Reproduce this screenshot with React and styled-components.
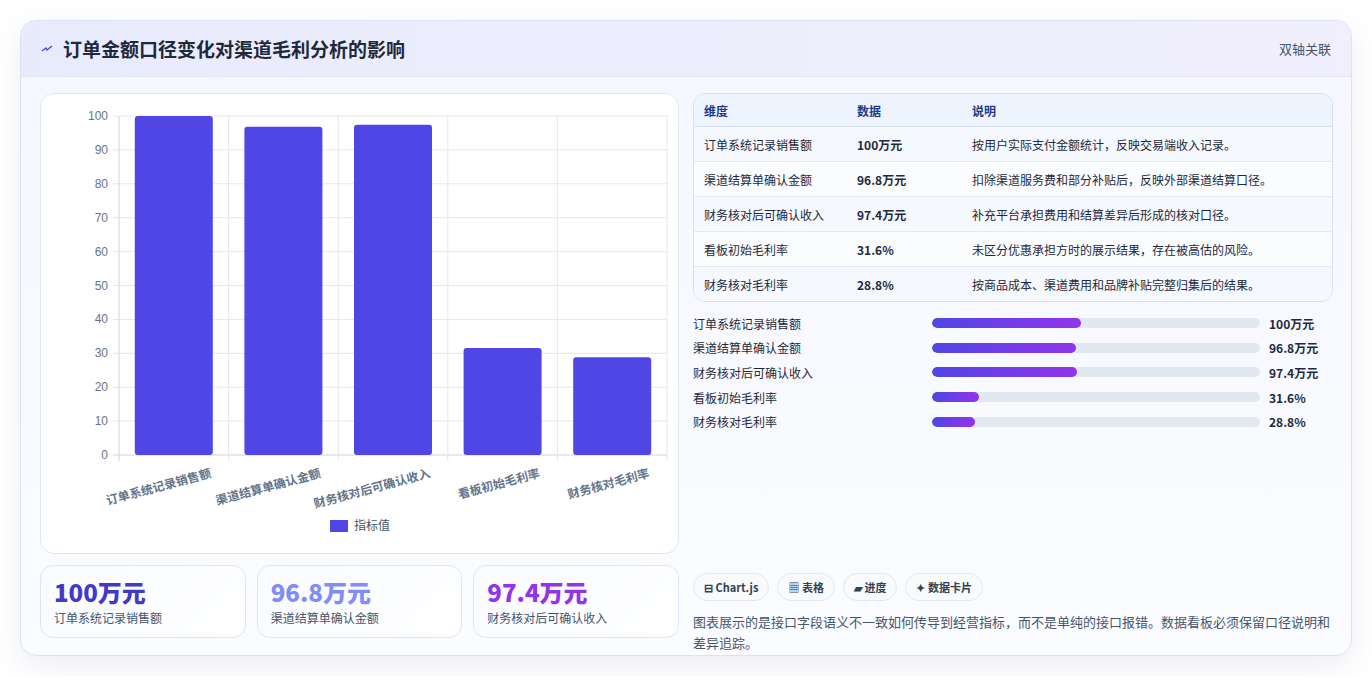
import React from "react";
import styled, { createGlobalStyle } from "styled-components";

const Global = createGlobalStyle`
  html, body { margin:0; padding:0; background:#fff; }
  body { font-family: "Noto Sans CJK SC", "Noto Sans", sans-serif; }
`;

const Page = styled.div`
  padding: 20px;
  width: 1332px;
`;
const Card = styled.div`
  border: 1px solid #dbe2f3;
  border-radius: 16px;
  overflow: hidden;
  background: linear-gradient(180deg, #f6f7fe 0%, #fbfcff 100%);
  box-shadow: 0 10px 30px rgba(80, 90, 160, 0.10);
  height: 636px;
  box-sizing: border-box;
`;
const Header = styled.div`
  height: 55px;
  display: flex;
  align-items: center;
  justify-content: space-between;
  padding: 0 20px;
  background: linear-gradient(90deg, #e8ebfc 0%, #f1effd 100%);
  border-bottom: 1px solid #e3e6f5;
`;
const Title = styled.h1`
  margin: 0;
  font-size: 19px;
  font-weight: 700;
  color: #1e293b;
  display: flex;
  align-items: center;
  gap: 10px;
`;
const HeadRight = styled.span`
  font-size: 13px;
  color: #475569;
`;
const Body = styled.div`
  display: grid;
  grid-template-columns: 639px 640px;
  gap: 14px;
  padding: 16px 19px 0 19px;
`;
const Col = styled.div`
  display: flex;
  flex-direction: column;
`;
const ChartCard = styled.div`
  height: 461px;
  background: #fff;
  border: 1px solid #e0e6f1;
  border-radius: 14px;
  box-sizing: border-box;
  overflow: hidden;
`;
const Stats = styled.div`
  display: grid;
  grid-template-columns: repeat(3, 1fr);
  gap: 11px;
  margin-top: 11px;
`;
const Stat = styled.div`
  height: 73px;
  box-sizing: border-box;
  border: 1px solid #dde6f3;
  border-radius: 13px;
  background: linear-gradient(135deg, #f9fbff, #ffffff);
  padding: 11px 13px;
`;
const StatVal = styled.div`
  font-size: 24px;
  font-weight: 800;
  line-height: 30px;
  color: ${p => p.$c};
`;
const StatLbl = styled.div`
  font-size: 12px;
  color: #475569;
  margin-top: 2px;
`;
const Table = styled.table`
  width: 100%;
  border-collapse: separate;
  border-spacing: 0;
  border: 1px solid #d5e0f0;
  border-radius: 12px;
  overflow: hidden;
  font-size: 12px;
  background: #fff;
`;
const Th = styled.th`
  text-align: left;
  font-weight: 700;
  color: #1e3a8a;
  background: #eef4fd;
  height: 32px;
  padding: 0 10px;
  border-bottom: 1px solid #d5e0f0;
  width: ${p => p.$w || "auto"};
`;
const Td = styled.td`
  height: 34px;
  padding: 0 10px;
  color: #1e293b;
  font-weight: ${p => (p.$b ? 600 : 400)};
  border-top: ${p => (p.$first ? "none" : "1px solid #e5ebf4")};
  background: ${p => (p.$odd ? "#f5f8fd" : "#fbfcfe")};
`;
const Bars = styled.div`
  display: flex;
  flex-direction: column;
  gap: 6.7px;
  margin-top: 12px;
`;
const BarRow = styled.div`
  display: grid;
  grid-template-columns: 239px 328px 1fr;
  gap: 0;
  align-items: center;
  height: 18px;
  font-size: 12px;
  color: #1e293b;
`;
const Track = styled.div`
  height: 10px;
  border-radius: 5px;
  background: #e2e8f0;
  overflow: hidden;
`;
const Fill = styled.div`
  height: 100%;
  border-radius: 5px;
  background: linear-gradient(90deg, #4f46e5, #9333ea);
`;
const BarVal = styled.span`
  font-weight: 700;
  padding-left: 9px;
`;
const Spacer = styled.div`
  flex: 1;
`;
const Chips = styled.div`
  display: flex;
  gap: 8px;
`;
const Chip = styled.span`
  height: 28px;
  box-sizing: border-box;
  padding: 0 10px;
  border: 1px solid #e2e8f0;
  border-radius: 14px;
  background: #f8fafc;
  font-size: 11px;
  font-weight: 700;
  color: #334155;
  display: inline-flex;
  align-items: center;
  gap: 3px;
`;
const Desc = styled.p`
  margin: 10px 0 0;
  font-size: 13px;
  line-height: 21px;
  color: #475569;
`;

const data = [
  ["订单系统记录销售额", 100, "100万元", "按用户实际支付金额统计，反映交易端收入记录。"],
  ["渠道结算单确认金额", 96.8, "96.8万元", "扣除渠道服务费和部分补贴后，反映外部渠道结算口径。"],
  ["财务核对后可确认收入", 97.4, "97.4万元", "补充平台承担费用和结算差异后形成的核对口径。"],
  ["看板初始毛利率", 31.6, "31.6%", "未区分优惠承担方时的展示结果，存在被高估的风险。"],
  ["财务核对毛利率", 28.8, "28.8%", "按商品成本、渠道费用和品牌补贴完整归集后的结果。"],
];

function Chart() {
  const x0 = 78, x1 = 626, yTop = 22, yBot = 361;
  const cw = (x1 - x0) / 5;
  const ys = (v) => yBot - (v / 100) * (yBot - yTop);
  const ticks = [0, 10, 20, 30, 40, 50, 60, 70, 80, 90, 100];
  return (
    <svg width="639" height="461" style={{ display: "block" }} fontFamily='"Noto Sans CJK SC", sans-serif'>
      {ticks.map(t => (
        <g key={t}>
          <line x1={x0 - 6} x2={x1} y1={ys(t)} y2={ys(t)} stroke={t === 0 ? "#cbd5e1" : "#e5e7eb"} />
          <text x={x0 - 11} y={ys(t) + 4} fontSize="12" fill="#64748b" textAnchor="end" fontFamily="Liberation Sans, sans-serif">{t}</text>
        </g>
      ))}
      {[0, 1, 2, 3, 4, 5].map(i => (
        <line key={i} x1={x0 + i * cw} x2={x0 + i * cw} y1={yTop} y2={yBot + 6} stroke={i === 0 ? "#cbd5e1" : "#e5e7eb"} />
      ))}
      {data.map((d, i) => {
        const cx = x0 + cw * i + cw / 2;
        return (
          <g key={i}>
            <rect x={cx - 39} y={ys(d[1])} width="78" height={yBot - ys(d[1])} rx="3" fill="#4f46e5" />
            <text x={cx + 38} y={yBot + 22} fontSize="12" fontWeight="600" fill="#64748b" textAnchor="end" transform={`rotate(-15 ${cx + 38} ${yBot + 22})`}>{d[0]}</text>
          </g>
        );
      })}
      <rect x="289" y="426" width="18" height="12" fill="#4f46e5" />
      <text x="313" y="436" fontSize="12" fill="#475569">指标值</text>
    </svg>
  );
}

export default function App() {
  return (
    <>
      <Global />
      <Page>
        <Card>
          <Header>
            <Title>
              <svg width="12" height="8" viewBox="0 0 12 8"><path d="M1 6 L5 3 L6 5 L11 1" stroke="#4f46e5" strokeWidth="1.4" fill="none" /></svg>
              订单金额口径变化对渠道毛利分析的影响
            </Title>
            <HeadRight>双轴关联</HeadRight>
          </Header>
          <Body>
            <Col>
              <ChartCard><Chart /></ChartCard>
              <Stats>
                <Stat><StatVal $c="#4338ca">100万元</StatVal><StatLbl>订单系统记录销售额</StatLbl></Stat>
                <Stat><StatVal $c="#818cf8">96.8万元</StatVal><StatLbl>渠道结算单确认金额</StatLbl></Stat>
                <Stat><StatVal $c="#9333ea">97.4万元</StatVal><StatLbl>财务核对后可确认收入</StatLbl></Stat>
              </Stats>
            </Col>
            <Col style={{ height: 560 }}>
              <Table>
                <thead>
                  <tr><Th $w="133px">维度</Th><Th $w="95px">数据</Th><Th>说明</Th></tr>
                </thead>
                <tbody>
                  {data.map((d, i) => (
                    <tr key={i}>
                      <Td $first={i === 0} $odd={i % 2 === 0}>{d[0]}</Td>
                      <Td $first={i === 0} $odd={i % 2 === 0} $b>{d[2]}</Td>
                      <Td $first={i === 0} $odd={i % 2 === 0}>{d[3]}</Td>
                    </tr>
                  ))}
                </tbody>
              </Table>
              <Bars>
                {data.map((d, i) => (
                  <BarRow key={i}>
                    <span>{d[0]}</span>
                    <Track><Fill style={{ width: `${(d[1] / 220) * 100}%` }} /></Track>
                    <BarVal>{d[2]}</BarVal>
                  </BarRow>
                ))}
              </Bars>
              <Spacer />
              <Chips>
                <Chip>⊟ Chart.js</Chip>
                <Chip>▦ 表格</Chip>
                <Chip>▰ 进度</Chip>
                <Chip>✦ 数据卡片</Chip>
              </Chips>
              <Desc>图表展示的是接口字段语义不一致如何传导到经营指标，而不是单纯的接口报错。数据看板必须保留口径说明和差异追踪。</Desc>
            </Col>
          </Body>
        </Card>
      </Page>
    </>
  );
}
